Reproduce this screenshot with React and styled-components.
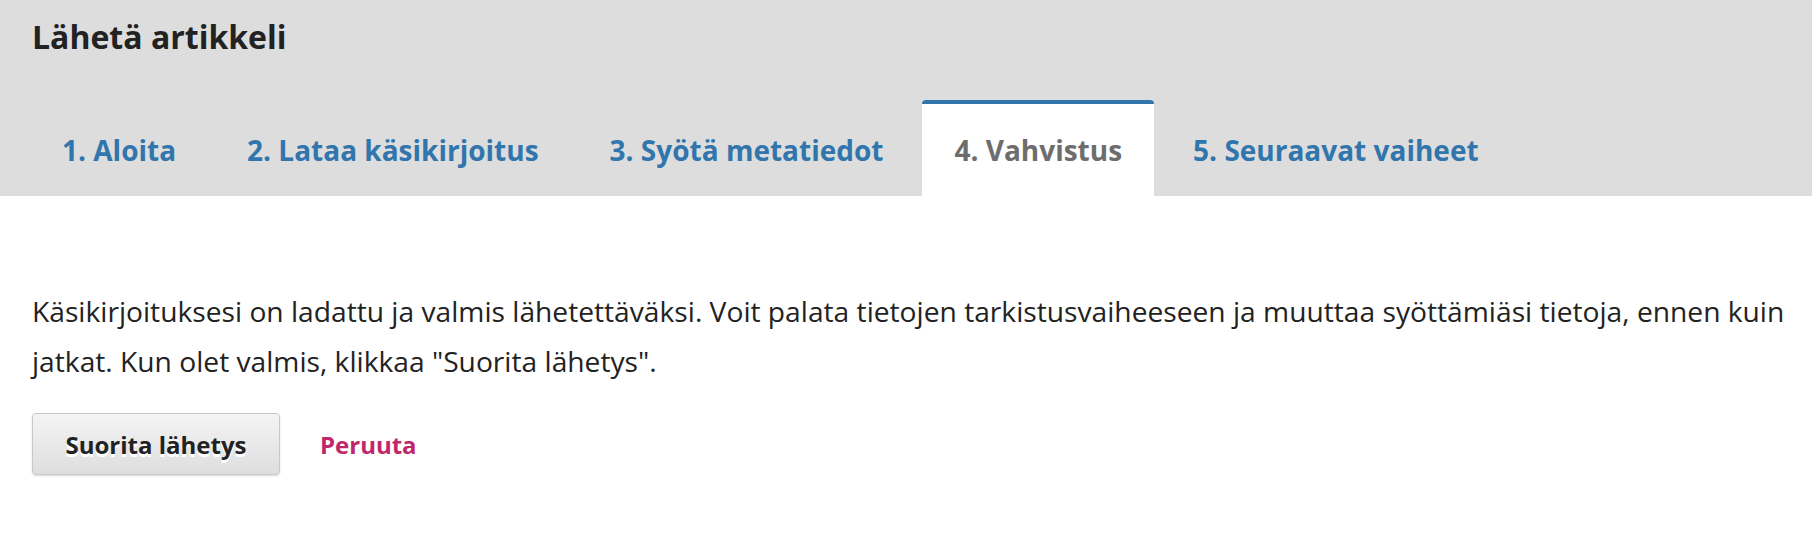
import React from 'react';
import styled, { createGlobalStyle } from 'styled-components';

const GlobalStyle = createGlobalStyle`
    html, body {
        margin: 0;
        padding: 0;
        background: #fff;
        font-family: "Open Sans", "Noto Sans", sans-serif;
        color: #222;
    }
`;

const steps = [
    '1. Aloita',
    '2. Lataa käsikirjoitus',
    '3. Syötä metatiedot',
    '4. Vahvistus',
    '5. Seuraavat vaiheet',
];

function App() {
    const active = 3;

    return (
        <Page>
            <GlobalStyle />
            <Header>
                <Title>Lähetä artikkeli</Title>
                <Tabs>
                    {steps.map((step, i) => (
                        <Tab key={step} $active={i === active}>{step}</Tab>
                    ))}
                </Tabs>
            </Header>
            <Content>
                <Intro>
                    Käsikirjoituksesi on ladattu ja valmis lähetettäväksi. Voit palata tietojen tarkistusvaiheeseen ja muuttaa syöttämiäsi tietoja, ennen kuin jatkat. Kun olet valmis, klikkaa "Suorita lähetys".
                </Intro>
                <Actions>
                    <SubmitButton>Suorita lähetys</SubmitButton>
                    <CancelLink href="#">Peruuta</CancelLink>
                </Actions>
            </Content>
        </Page>
    );
}

const Page = styled.div`
    width: 100%;
    min-height: 546px;
    background: #fff;
`;

const Header = styled.div`
    background: #ddd;
    padding: 12px 0 0 32px;
`;

const Title = styled.h1`
    margin: 0;
    font-size: 32px;
    font-weight: 700;
    line-height: 50px;
    color: #222;
`;

const Tabs = styled.div`
    display: flex;
    gap: 7px;
    margin-top: 38px;
    margin-left: -2px;
`;

const Tab = styled.div`
    height: 92px;
    padding: 0 32px;
    display: flex;
    align-items: center;
    font-size: 28px;
    font-weight: 700;
    color: ${(p) => (p.$active ? '#6d6d6d' : '#3175ad')};
    background: ${(p) => (p.$active ? '#fff' : 'transparent')};
    border-top: 4px solid ${(p) => (p.$active ? '#3175ad' : 'transparent')};
    border-radius: 4px 4px 0 0;
`;

const Content = styled.div`
    padding: 90px 8px 0 32px;
`;

const Intro = styled.p`
    margin: 0;
    font-size: 28.2px;
    line-height: 50px;
    color: #222;
`;

const Actions = styled.div`
    display: flex;
    align-items: center;
    gap: 40px;
    margin-top: 27px;
`;

const SubmitButton = styled.button`
    width: 248px;
    height: 62px;
    font-family: inherit;
    font-size: 24px;
    font-weight: 700;
    color: #222;
    background: linear-gradient(#f4f4f4, #dedede);
    border: 1px solid #c8c8c8;
    border-radius: 4px;
    box-shadow: 0 1px 2px rgba(0, 0, 0, 0.15);
    text-shadow: 0 3px 0 #fff;
    cursor: pointer;
`;

const CancelLink = styled.a`
    font-size: 24px;
    font-weight: 700;
    color: #c0266a;
    text-decoration: none;
`;

export default App;
